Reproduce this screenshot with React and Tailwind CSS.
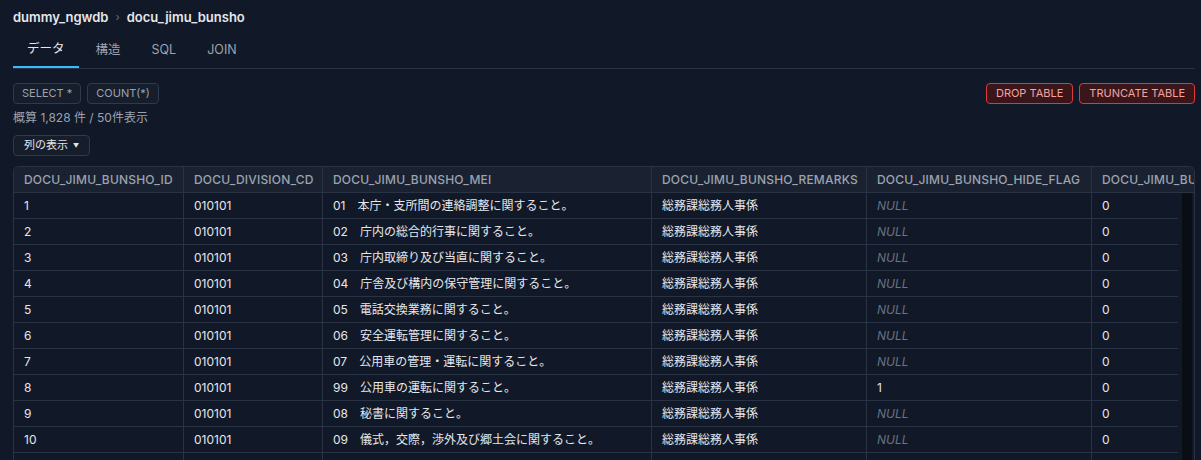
import React from "react";

const rows = [
  ["1", "010101", "01\u3000本庁・支所間の連絡調整に関すること。", "総務課総務人事係", null, "0"],
  ["2", "010101", "02\u3000庁内の総合的行事に関すること。", "総務課総務人事係", null, "0"],
  ["3", "010101", "03\u3000庁内取締り及び当直に関すること。", "総務課総務人事係", null, "0"],
  ["4", "010101", "04\u3000庁舎及び構内の保守管理に関すること。", "総務課総務人事係", null, "0"],
  ["5", "010101", "05\u3000電話交換業務に関すること。", "総務課総務人事係", null, "0"],
  ["6", "010101", "06\u3000安全運転管理に関すること。", "総務課総務人事係", null, "0"],
  ["7", "010101", "07\u3000公用車の管理・運転に関すること。", "総務課総務人事係", null, "0"],
  ["8", "010101", "99\u3000公用車の運転に関すること。", "総務課総務人事係", "1", "0"],
  ["9", "010101", "08\u3000秘書に関すること。", "総務課総務人事係", null, "0"],
  ["10", "010101", "09\u3000儀式，交際，渉外及び郷土会に関すること。", "総務課総務人事係", null, "0"],
  ["", "", "", "", "", ""],
];

const headers = [
  "DOCU_JIMU_BUNSHO_ID",
  "DOCU_DIVISION_CD",
  "DOCU_JIMU_BUNSHO_MEI",
  "DOCU_JIMU_BUNSHO_REMARKS",
  "DOCU_JIMU_BUNSHO_HIDE_FLAG",
  "DOCU_JIMU_BU",
];

const widths = ["w-[170px]", "w-[139px]", "w-[329px]", "w-[215px]", "w-[225px]", "w-[200px]"];

export default function App() {
  return (
    <div
      className="h-[460px] overflow-hidden bg-[#111827] pl-[13px] pr-[6px] pt-[7px] text-[#e5e7eb]"
      style={{ fontFamily: 'Inter, "Noto Sans CJK JP", sans-serif' }}
    >
      <div className="flex h-[20px] items-center text-[13px] font-semibold leading-[20px] text-[#e5e7eb]">
        <span>dummy_ngwdb</span>
        <span className="mx-[7px] text-[11px] font-normal text-[#6b7280]">›</span>
        <span>docu_jimu_bunsho</span>
      </div>
      <div className="mt-[6px] flex border-b border-[#2a3344] text-[12.5px]">
        <div className="flex h-[35px] items-center border-b-2 border-[#38bdf8] px-[14px] text-[#e5e7eb]">データ</div>
        <div className="flex h-[35px] items-center px-[17px] text-[#9ca3af]">構造</div>
        <div className="flex h-[35px] items-center px-[14px] text-[#9ca3af]">SQL</div>
        <div className="flex h-[35px] items-center px-[17px] text-[#9ca3af]">JOIN</div>
      </div>

      <div className="mt-[14px] flex items-center justify-between">
        <div className="flex gap-[6px]">
          <button className="h-[21px] rounded-[4px] border border-[#2f3a4c] bg-[#161e2b] px-[8px] text-[11px] text-[#9ca3af]">SELECT *</button>
          <button className="h-[21px] rounded-[4px] border border-[#2f3a4c] bg-[#161e2b] px-[8px] text-[11px] text-[#9ca3af]">COUNT(*)</button>
        </div>
        <div className="flex gap-[6px]">
          <button className="h-[21px] rounded-[4px] border border-[#dc3a3a] bg-[#3a1519] px-[9px] text-[11px] text-[#f4a3a3]">DROP TABLE</button>
          <button className="h-[21px] rounded-[4px] border border-[#dc3a3a] bg-[#3a1519] px-[9px] text-[11px] text-[#f4a3a3]">TRUNCATE TABLE</button>
        </div>
      </div>

      <div className="mt-[6px] text-[12px] leading-[16px] text-[#9ca3af]">概算 1,828 件 / 50件表示</div>

      <button className="mt-[9px] flex h-[21px] items-center gap-[5px] rounded-[4px] border border-[#2f3a4c] bg-[#161e2b] px-[10px] text-[11px] text-[#e5e7eb]">
        列の表示 <span className="text-[6px]">▼</span>
      </button>

      <div className="mt-[10px] overflow-hidden rounded-t-[6px] border border-b-0 border-[#2a3344]">
        <div className="flex h-[26px] border-b border-[#2a3344] bg-[#1a2231] text-[12px] font-medium tracking-[0.2px] text-[#9ca3af]">
          {headers.map((h, i) => (
            <div
              key={h}
              className={`${widths[i]} flex shrink-0 items-center overflow-hidden whitespace-nowrap px-[10px] ${i < headers.length - 1 ? "border-r border-[#2a3344]" : ""}`}
            >
              {h}
            </div>
          ))}
        </div>
        <div className="flex">
          <div className="min-w-0 flex-1 overflow-hidden">
            {rows.map((r, ri) => (
              <div key={ri} className="flex h-[26px] border-b border-[#2a3344] text-[12px]">
                {r.map((c, i) => (
                  <div
                    key={i}
                    className={`${widths[i]} flex shrink-0 items-center overflow-hidden whitespace-nowrap px-[10px] ${i < r.length - 1 ? "border-r border-[#2a3344]" : ""}`}
                  >
                    {c === null ? <span className="italic text-[#6b7280]">NULL</span> : c}
                  </div>
                ))}
              </div>
            ))}
          </div>
          <div className="ml-[4px] mr-[2px] w-[10px] shrink-0 bg-[#0a0d13]"></div>
        </div>
      </div>
    </div>
  );
}
